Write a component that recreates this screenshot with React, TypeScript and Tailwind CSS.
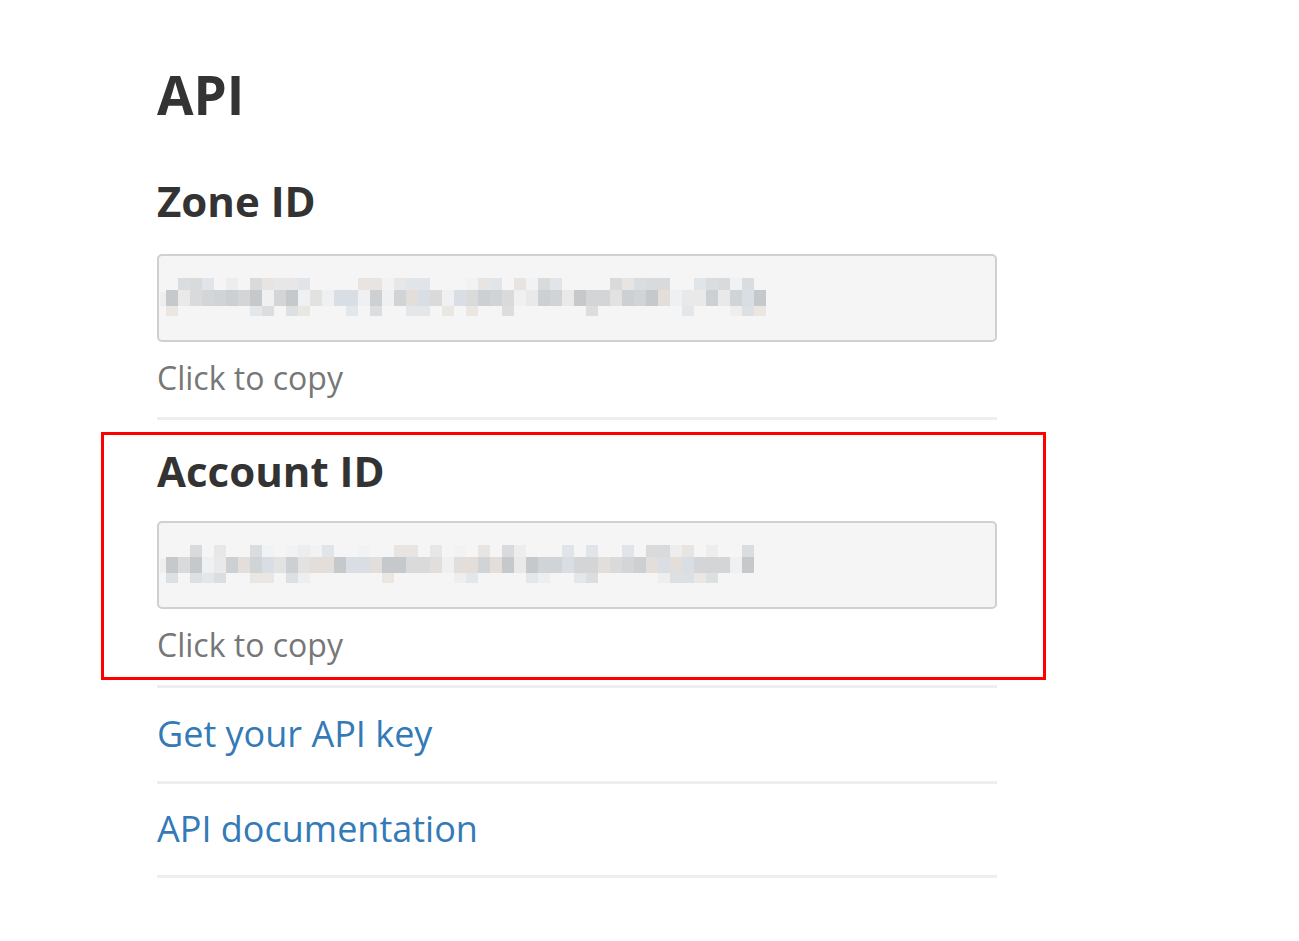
import React from "react";

function mulberry(seed: number) {
  return function () {
    let t = (seed += 0x6d2b79f5);
    t = Math.imul(t ^ (t >>> 15), t | 1);
    t ^= t + Math.imul(t ^ (t >>> 7), t | 61);
    return ((t ^ (t >>> 14)) >>> 0) / 4294967296;
  };
}

const palette = ["#c6c9cb", "#d3d5d6", "#dadada", "#e2e2e2", "#e9e9e9", "#d0d4d7", "#d9dee4", "#e3ded9", "#cdd0d2", "#eef0f2"];

function Blur({ seed, cols }: { seed: number; cols: number }) {
  const r = mulberry(seed);
  const w = 12;
  const cells: React.ReactNode[] = [];
  for (let i = 0; i < cols; i++) {
    const x = 6 + i * w;
    if (r() > 0.4) cells.push(<rect key={`a${i}`} x={x} y={0} width={w} height={12} fill={palette[3 + (Math.floor(r() * 7) % 7)]} opacity={0.75} />);
    cells.push(<rect key={`b${i}`} x={x} y={12} width={w} height={16} fill={palette[Math.floor(r() * palette.length)]} />);
    if (r() > 0.62) cells.push(<rect key={`c${i}`} x={x} y={28} width={w} height={10} fill={palette[4 + Math.floor(r() * 5)]} opacity={0.65} />);
  }
  return (
    <svg width={cols * w + 12} height={40} className="block">
      <rect x={0} y={14} width={6} height={14} fill="#eeeeee" />
      {cells}
    </svg>
  );
}

function IdField({ title, seed, cols, inputGap }: { title: string; seed: number; cols: number; inputGap: string }) {
  return (
    <div>
      <h2 className="text-[42px] font-bold leading-none text-[#333333]">{title}</h2>
      <div className={`${inputGap} box-border flex h-[88px] w-[840px] items-center rounded-[5px] border-2 border-[#d0d0d0] bg-[#f5f5f5] pl-[1px]`}>
        <Blur seed={seed} cols={cols} />
      </div>
      <div className="mt-[20px] text-[32px] leading-none text-[#777777]">Click to copy</div>
    </div>
  );
}

export default function App() {
  return (
    <div className="relative min-h-[941px] w-[1299px] bg-white" style={{ fontFamily: '"Open Sans", "Noto Sans", sans-serif' }}>
      <div className="pl-[157px] pt-[68px]">
        <h1 className="text-[53px] font-bold leading-none text-[#333333]">API</h1>
        <div className="mt-[59px]">
          <IdField title="Zone ID" seed={7} cols={50} inputGap="mt-[32px]" />
        </div>
        <div className="mt-[23px] h-[3px] w-[840px] bg-[#eeeeee]" />
        <div className="mt-[30px]">
          <IdField title="Account ID" seed={23} cols={49} inputGap="mt-[29px]" />
        </div>
        <div className="mt-[24px] h-[3px] w-[840px] bg-[#eeeeee]" />
        <a className="mt-[28px] block text-[36px] leading-none text-[#337ab7]" href="#">Get your API key</a>
        <div className="mt-[29px] h-[3px] w-[840px] bg-[#eeeeee]" />
        <a className="mt-[27px] block text-[36px] leading-none text-[#337ab7]" href="#">API documentation</a>
        <div className="mt-[28px] h-[3px] w-[840px] bg-[#eeeeee]" />
      </div>
      <div className="pointer-events-none absolute left-[101px] top-[432px] h-[248px] w-[945px] border-[3px] border-[#ff0000]" />
    </div>
  );
}
